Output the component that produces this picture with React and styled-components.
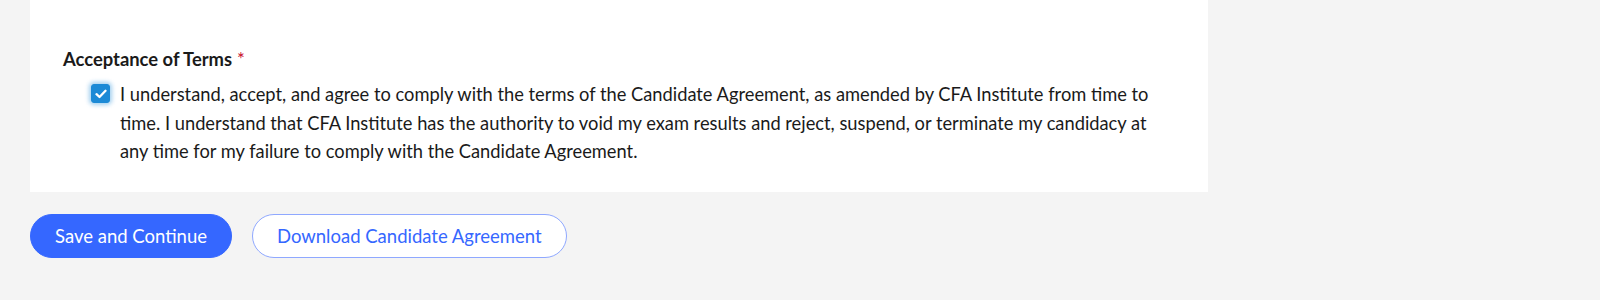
import React, { useState } from "react";
import styled, { createGlobalStyle } from "styled-components";

const GlobalStyle = createGlobalStyle`
  html, body {
    margin: 0;
    background: #f4f4f4;
    font-family: Lato, "Open Sans", sans-serif;
    color: #1e1e1e;
  }
`;

const Page = styled.div`
  padding: 0 30px;
  height: 300px;
  overflow: hidden;
  box-sizing: border-box;
`;

const Card = styled.section`
  width: 1178px;
  box-sizing: border-box;
  background: #fff;
  padding: 46px 33px 26px 33px;
`;

const Legend = styled.div`
  font-size: 18.4px;
  font-weight: 700;
  line-height: 26px;
  color: #1a1a1a;
  margin-bottom: 8px;
`;

const Required = styled.span`
  color: #c8102e;
  font-weight: 400;
  margin-left: 5px;
`;

const CheckRow = styled.label`
  display: flex;
  align-items: flex-start;
  gap: 10px;
  padding-left: 28px;
  cursor: pointer;
`;

const Box = styled.span`
  flex: none;
  width: 19px;
  height: 19px;
  margin-top: 4px;
  border-radius: 3px;
  background: ${(p) => (p.checked ? "#1c8ad6" : "#fff")};
  border: 1px solid ${(p) => (p.checked ? "#1c8ad6" : "#8a8a8a")};
  box-sizing: border-box;
  box-shadow: 0 0 4px 2px rgba(28, 138, 214, 0.4);
  display: flex;
  align-items: center;
  justify-content: center;
`;

const Terms = styled.span`
  font-size: 18.3px;
  line-height: 28.5px;
  color: #1a1a1a;
`;

const Actions = styled.div`
  display: flex;
  gap: 20px;
  margin-top: 22px;
`;

const Button = styled.button`
  height: 44px;
  box-sizing: border-box;
  border-radius: 22px;
  font-family: Lato, "Open Sans", sans-serif;
  font-size: 18.5px;
  cursor: pointer;
  padding: 0 24px;
  background: ${(p) => (p.outline ? "#fff" : "#3567ff")};
  color: ${(p) => (p.outline ? "#3567ff" : "#fff")};
  border: 1px solid ${(p) => (p.outline ? "#8fa8ff" : "#3567ff")};
`;

export default function App() {
  const [checked, setChecked] = useState(true);
  return (
    <>
      <GlobalStyle />
      <Page>
        <Card>
          <Legend>
            Acceptance of Terms<Required>*</Required>
          </Legend>
          <CheckRow onClick={() => setChecked(!checked)}>
            <Box checked={checked}>
              {checked && (
                <svg width="12" height="10" viewBox="0 0 12 10">
                  <path
                    d="M1.5 5.2 L4.5 8 L10.5 1.8"
                    fill="none"
                    stroke="#fff"
                    strokeWidth="2.3"
                    strokeLinecap="round"
                    strokeLinejoin="round"
                  />
                </svg>
              )}
            </Box>
            <Terms>
              I understand, accept, and agree to comply with the terms of the
              Candidate Agreement, as amended by CFA Institute from time to
              time. I understand that CFA Institute has the authority to void my
              exam results and reject, suspend, or terminate my candidacy at any
              time for my failure to comply with the Candidate Agreement.
            </Terms>
          </CheckRow>
        </Card>
        <Actions>
          <Button>Save and Continue</Button>
          <Button outline>Download Candidate Agreement</Button>
        </Actions>
      </Page>
    </>
  );
}
